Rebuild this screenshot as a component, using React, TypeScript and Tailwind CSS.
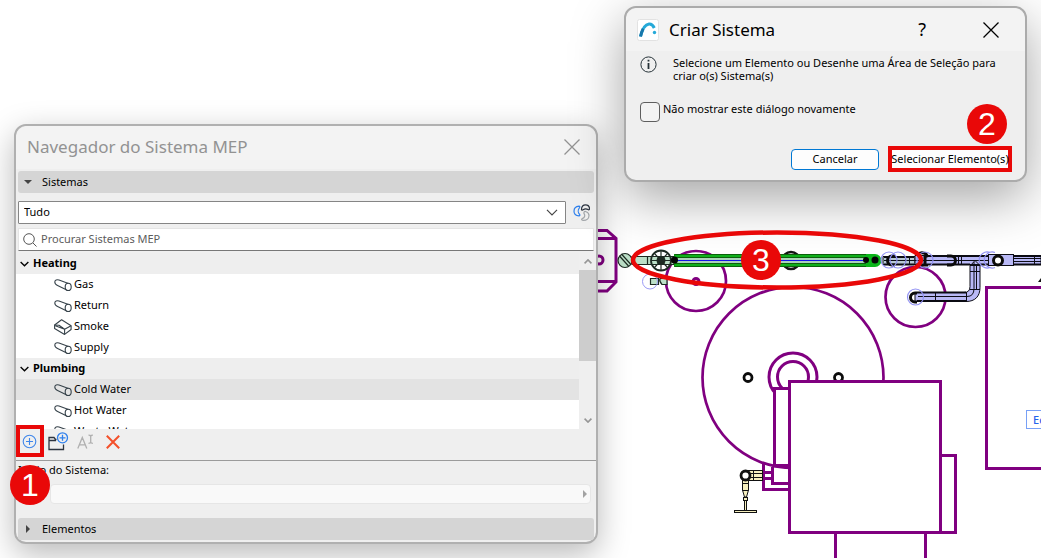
import { useState } from "react";
import type { ReactNode } from "react";

type SystemKind = "pipe" | "duct";

interface SystemItem {
  name: string;
  kind: SystemKind;
}

interface SystemGroup {
  name: string;
  items: SystemItem[];
}

const GROUPS: SystemGroup[] = [
  {
    name: "Heating",
    items: [
      { name: "Gas", kind: "pipe" },
      { name: "Return", kind: "pipe" },
      { name: "Smoke", kind: "duct" },
      { name: "Supply", kind: "pipe" },
    ],
  },
  {
    name: "Plumbing",
    items: [
      { name: "Cold Water", kind: "pipe" },
      { name: "Hot Water", kind: "pipe" },
      { name: "Waste Water", kind: "pipe" },
    ],
  },
];

function PipeIcon() {
  return (
    <svg className="h-4 w-[18px] shrink-0" viewBox="0 0 18 16" fill="none" stroke="#36424a" strokeWidth="1.1">
      <path d="M14.500 6.400 5 3C3 2.300.8 3 .8 5c0 1.800 1 2.700 2.800 3.400l8.700 4.300" />
      <ellipse cx="14.200" cy="9.900" rx="3" ry="3.600" />
    </svg>
  );
}

function DuctIcon() {
  return (
    <svg className="h-4 w-[18px] shrink-0" viewBox="0 0 18 16" fill="none" stroke="#36424a" strokeWidth="1.1" strokeLinejoin="round">
      <path d="M.6 6 7.600.8l9.500 6v3.700l-6.500 4.900L.6 9.600z" />
      <path d="M.6 6l4.400.3 5.600 4L17.100 6.800M10.600 10.300v5M.6 6.500l10 3.800" />
    </svg>
  );
}

function CloseIcon() {
  return (
    <svg className="size-4" viewBox="0 0 16 16" fill="none" stroke="currentColor" strokeWidth="1.3">
      <path d="m.5.5 15 15m0-15-15 15" />
    </svg>
  );
}

function Chevron({ className, weight = 1.5 }: { className: string; weight?: number }) {
  return (
    <svg className={className} viewBox="0 0 10 6" fill="none" stroke="currentColor" strokeWidth={weight}>
      <path d="m.7.7 4.300 4.300L9.300.7" />
    </svg>
  );
}

function SwatchIcon() {
  return (
    <svg className="size-[17px]" viewBox="0 0 17 17" fill="none" strokeWidth="1.2">
      <path stroke="#2f80ed" d="M6 2.200C3 2.500 1 4.600 1 7.200c0 2.700 2 4.400 5 4.600.9 0 1.200-.8.600-1.400-1.700-1.700-1.800-4.600-.2-6.500.7-.8.500-1.700-.4-1.700Z" />
      <path stroke="#2c3440" d="M8.500 5.400C8.500 2.500 10.200.8 12.500.8s4 1.700 4 4.100c0 .9-.8 1.200-1.500.7-1.500-1-3.300-1-4.900.2-.8.600-1.600.4-1.600-.4Z" />
      <path stroke="#a2a6aa" d="M11 8.200c.4-.8 1.300-.9 2.200-.5 1.800.7 2.800 2 2.800 3.800 0 2.700-2.300 4.900-5.500 4.900-1.800 0-2.600-1.100-1.200-1.800 2.500-1.200 3-3 1.900-4.700-.4-.600-.5-1.100-.2-1.700Z" />
    </svg>
  );
}

function FolderPlusIcon() {
  return (
    <svg className="h-5 w-[22px]" viewBox="0 0 22 20" fill="none" strokeWidth="1.3">
      <path stroke="#2c3440" d="M8.500 7.500H7.500L6 5.500H1V17.500h14.500V12.500M1 8.500h7" />
      <circle cx="14.500" cy="5.800" r="5" stroke="#2f80ed" />
      <path stroke="#2f80ed" d="M11.500 5.800h6m-3-3v6" />
    </svg>
  );
}

function RenameIcon() {
  return (
    <svg className="h-4 w-[18px]" viewBox="0 0 18 16" fill="none" stroke="#b0b0b0" strokeWidth="1.3">
      <path d="m.8 14.500 4.500-11 4.500 11M2.300 10.800h6M11.500 1.200c1.300 0 2 .3 2.200 1 .2-.7.900-1 2.200-1M13.700 2.200v6.200M11.500 9.300c1.300 0 2-.3 2.200-1 .2.700.9 1 2.200 1" />
    </svg>
  );
}

function AppLogo() {
  return (
    <svg className="size-[22px]" viewBox="0 0 22 22" fill="none" aria-hidden="true">
      <rect x=".5" y=".5" width="21" height="21" rx="2" fill="#fff" stroke="#e2e2e2" />
      <path d="M3.500 17.500C5 11 7.500 5.500 12 5c2.500-.2 4 1.200 5.300 4" stroke="#25a9d8" strokeWidth="3" />
      <path d="M3.500 17.500c.7-3 1.500-5.600 2.700-7.800" stroke="#1877ab" strokeWidth="3" />
      <circle cx="17.500" cy="13.500" r="1.700" fill="#25a9d8" />
    </svg>
  );
}

function PlanDrawing() {
  return (
    <svg className="absolute left-0 top-0 h-[558px] w-[1041px]" viewBox="0 0 1041 558" fill="none" aria-hidden="true">
      {/* equipment outlines */}
      <g stroke="#800080" strokeWidth="3">
        <path d="M590 230.500h17l9 8v43.500l-9 9h-17M590 238.500h26M590 281.500h26" />
        <circle cx="599" cy="260" r="4" />
        <circle cx="696" cy="281" r="30" strokeWidth="2.700" />
        <circle cx="696" cy="281.500" r="3" />
        <circle cx="915.500" cy="297" r="30" strokeWidth="2.700" />
        <circle cx="793" cy="377.500" r="90.500" strokeWidth="2.700" />
        <circle cx="793" cy="377" r="24" />
        <circle cx="793" cy="377" r="15.500" />
        <path d="M1041 287.500h-54.500v181H1041" />
      </g>
      <g stroke="#0c0c0c" strokeWidth="2.800">
        <circle cx="748" cy="377.500" r="4" />
        <circle cx="838.500" cy="377.500" r="4" />
      </g>
      <g stroke="#800080" strokeWidth="3">
        <path d="M763.500 463v26.500H790M790 483.500h-17.500V467M763.500 472.500h9M763.500 478.500h9M772.500 466H790" />
        <path d="M789 388.500h-14.500v77H789" fill="#fff" />
        <path d="M941 455.500h14.500v77H941M835.500 534v24M925.500 534v24" />
        <rect x="789.500" y="381.500" width="151" height="151" fill="#fff" />
      </g>

      {/* valve with drain */}
      <g stroke="#111" strokeWidth="1" fill="#f6efbe">
        <rect x="747.500" y="470.500" width="15" height="10" />
        <path d="M747 473.500h15M747 477.500h15M753.500 471v9" />
        <path d="M742.500 480h6v10l-2 7h-2l-2-7zM743 483.500h5M742.500 490.500h6" />
        <rect x="743.500" y="497.500" width="4" height="3" />
        <rect x="744.500" y="500.500" width="2" height="10" />
        <rect x="734.500" y="510.500" width="22" height="2" />
        <circle cx="745.500" cy="475.500" r="4.500" fill="#fff" strokeWidth="2.800" />
      </g>

      {/* left fittings */}
      <g stroke="#1d2a22" strokeWidth="1.2">
        <circle cx="625" cy="260.500" r="7" fill="#bce0c8" />
        <path d="m619.500 256 9 10m-7-12 9 10" />
        <path d="M632 256.500h42v8h-42z" fill="#bce0c8" />
        <path d="M647.500 257v7" />
        <circle cx="661" cy="260.500" r="10" strokeWidth="1.800" />
        <circle cx="661" cy="260.500" r="3.500" fill="#1d2a22" strokeWidth="2" />
        <path d="m654 253 14 15M654 268l14-15M661 250v21M651 260.500h24" />
        <path d="M650.500 278.500h8v6h-8zM660 278.500h7v6h-5q-3-3-2-6" fill="#bce0c8" />
      </g>
      <circle cx="650" cy="281.500" r="7.500" stroke="#9a9af5" />

      {/* selected pipe */}
      <circle cx="791" cy="260.500" r="8.500" stroke="#151515" strokeWidth="2.500" />
      <rect x="674.500" y="254.500" width="200" height="12" fill="#aad3ba" />
      <path d="M674 256h200M674 265h200" stroke="#10b01c" strokeWidth="3" />
      <path d="M674 254.500h200M674 257.500h200M674 263.500h200M674 266.500h200" stroke="#0c620c" />
      <path d="M674 260.500h189" stroke="#1515e6" />
      <path d="M674.500 254v13" stroke="#0c900c" />
      <path d="M866 254h9a6.500 6.500 0 0 1 0 13h-9z" fill="#0cb51a" />
      <g fill="#050505">
        <circle cx="674.500" cy="260" r="3.500" />
        <circle cx="866" cy="260" r="3" />
        <circle cx="875" cy="260" r="3.500" />
      </g>

      {/* supply line */}
      <g stroke="#0d0d16" strokeWidth="1">
        <path d="M883 256.500h32v8h-32z" fill="#b8c9d5" />
        <path d="M915 255.500h126v9H915z" fill="#b9b9f6" />
        <path d="M884 260.500h104M1013 258.500h28M1013 261.500h28M955.500 255v10M958.500 255v10M961.500 255v10M1034.500 255v10M909.500 256v9M905.500 256v9" />
        <path d="M915 292.500h49q6 0 6-6v-21h10v22c0 9-5 14-14 14h-51z" fill="#b9b9f6" />
        <path d="M918 296.500h49q7 0 7-8V262M935.500 293v8M966.500 292v10M970 271.500h10M970 289.500h10M976.500 265v24M970.500 265.500l4.500-5 5 5" />
        <rect x="988.500" y="254.500" width="25" height="11" fill="#b9b9f6" />
      </g>
      <path d="M884 257h30M884 264.500h30M928 256h60M928 264.500h42M980 264.500h8M1013 256h28M1013 264.500h28M917 292.500h49M917 301h49" stroke="#0b0b12" strokeWidth="2" />
      <g stroke="#0b0b0b" strokeWidth="3">
        <path d="M895 256h-3a4 4 0 0 0 0 9h3M917 293h-2a4 4 0 0 0 0 9h2M947 256h4a4 4 0 0 1 0 9h-4" />
        <circle cx="998" cy="260.500" r="4.500" fill="#fff" />
        <path d="M917 255q4-4 9-1l2 3M916 265h12M925 256v9" />
      </g>
      <g stroke="#9292f4" strokeWidth="1.2">
        <circle cx="889" cy="260" r="8" />
        <circle cx="898" cy="260" r="8" />
        <circle cx="915.500" cy="297" r="8" />
        <circle cx="925" cy="260" r="8" />
        <path d="M990 252.500a8 8 0 1 0 0 15M995 252.500a8 8 0 1 0 0 15" />
      </g>
      <path d="m1041 278-3 4h3z" fill="#111" />
    </svg>
  );
}

function TreeRow({ item, selected, onSelect }: { item: SystemItem; selected: boolean; onSelect: () => void }) {
  return (
    <button
      onClick={onSelect}
      className={`flex h-[21px] w-full items-center gap-[2px] pl-[38px] text-left text-[11px] ${selected ? "bg-[#e3e3e3]" : "bg-white"}`}
    >
      {item.kind === "pipe" ? <PipeIcon /> : <DuctIcon />}
      <span>{item.name}</span>
    </button>
  );
}

function SectionBar({ label, open, onToggle }: { label: string; open: boolean; onToggle: () => void }) {
  return (
    <button
      onClick={onToggle}
      aria-expanded={open}
      className="mx-[2px] flex h-[22px] items-center gap-2 rounded-[3px] bg-[#d5d5d5] pl-[6px] text-left text-[11px]"
    >
      <svg className="size-2" viewBox="0 0 8 8" fill="#444" aria-hidden="true">
        {open ? <path d="M0 2h8L4 6z" /> : <path d="M2 0v8l4-4z" />}
      </svg>
      <span className="pl-[2px]">{label}</span>
    </button>
  );
}

function Step({ children, className }: { children: ReactNode; className: string }) {
  return (
    <span
      className={`absolute flex size-10 items-center justify-center rounded-full bg-[#e90808] font-['Liberation_Sans',sans-serif] text-[32px] leading-none text-white ${className}`}
    >
      {children}
    </span>
  );
}

function SystemBrowser() {
  const [selected, setSelected] = useState("Cold Water");
  const [systemsOpen, setSystemsOpen] = useState(true);
  const [elementsOpen, setElementsOpen] = useState(false);
  const [query, setQuery] = useState("");

  return (
    <section className="absolute left-[14px] top-[124px] flex w-[584px] flex-col rounded-xl border-2 border-[#b0b0b0] bg-[#efefef] pb-[2px] shadow-[0_10px_32px_rgba(0,0,0,0.28)]">
      <header className="flex h-[43px] items-center justify-between rounded-t-xl bg-[#f3f3f3] pb-[2px] pl-[11px] pr-4 text-[#929292]">
        <h2 className="text-[17px]">Navegador do Sistema MEP</h2>
        <button aria-label="Fechar"><CloseIcon /></button>
      </header>
      <div className="h-[2px]" />
      <SectionBar label="Sistemas" open={systemsOpen} onToggle={() => setSystemsOpen(!systemsOpen)} />

      <div className="mt-2 flex h-[23px] items-center pl-[2px]">
        <div className="relative flex flex-1">
          <select aria-label="Sistema" className="block h-[23px] w-full appearance-none rounded-[1px] border border-[#858585] bg-white pl-[5px] text-[11px]">
            <option>Tudo</option>
          </select>
          <Chevron weight={1} className="pointer-events-none absolute right-2 top-2 h-[7px] w-3 text-[#444]" />
        </div>
        <button aria-label="Cores dos sistemas" className="flex w-[30px] justify-center"><SwatchIcon /></button>
      </div>

      <label className="mx-[2px] mt-1 flex h-[23px] items-center gap-1 border border-b-[#777] border-l-[#e4e4e4] border-r-[#e4e4e4] border-t-[#e4e4e4] bg-white pl-1">
        <svg className="size-[14px] text-[#555]" viewBox="0 0 14 14" fill="none" stroke="currentColor">
          <circle cx="6" cy="6" r="5.300" />
          <path d="m10 10 3.500 3.500" />
        </svg>
        <input
          value={query}
          onChange={(e) => setQuery(e.target.value)}
          placeholder="Procurar Sistemas MEP"
          aria-label="Procurar Sistemas MEP"
          className="flex-1 text-[11px] outline-none placeholder:text-[#5c5c5c]"
        />
      </label>

      <div className="mt-[2px] flex h-[176px]">
        <div className="min-w-0 flex-1 overflow-hidden">
          {GROUPS.map((group) => (
            <div key={group.name}>
              <h3 className="flex h-[21px] items-center gap-1 bg-[#eee] pl-1 text-[11px] font-bold">
                <Chevron className="h-[6px] w-[9px]" />
                {group.name}
              </h3>
              {group.items.map((item) => (
                <TreeRow
                  key={item.name}
                  item={item}
                  selected={selected === item.name}
                  onSelect={() => setSelected(item.name)}
                />
              ))}
            </div>
          ))}
        </div>
        <div className="flex w-[17px] flex-col items-center text-[#969696]">
          <Chevron weight={2} className="my-[6px] h-[5px] w-2 rotate-180" />
          <div className="h-[91px] w-full bg-[#cdcdcd]" />
          <Chevron weight={2} className="mb-[6px] mt-auto h-[5px] w-2" />
        </div>
      </div>

      <div className="flex h-8 items-center gap-[11px] border-b border-[#9b9b9b] pb-[6px] pl-[6px]">
        <button aria-label="Novo sistema">
          <svg className="size-[15px]" viewBox="0 0 15 15" fill="none" stroke="#3f86ea" strokeWidth="1.1">
            <circle cx="7.500" cy="7.500" r="6.300" />
            <path d="M4 7.500h7M7.500 4v7" />
          </svg>
        </button>
        <button aria-label="Novo grupo"><FolderPlusIcon /></button>
        <button aria-label="Renomear" disabled className="-ml-1"><RenameIcon /></button>
        <button aria-label="Apagar">
          <svg className="size-[14px]" viewBox="0 0 14 14" fill="none" stroke="#f4502a" strokeWidth="2">
            <path d="m.8.8 12.400 12.400m0-12.400L.8 13.200" />
          </svg>
        </button>
      </div>

      <div className="flex h-[57px] flex-col text-[11px]">
        <span className="h-[23px] pl-[2px] leading-[18px]">Início do Sistema:</span>
        <button
          aria-label="Início do Sistema"
          disabled
          className="ml-[34px] mr-[5px] flex h-5 items-center justify-end rounded border border-[#e6e6e6] bg-[#f9f9f9] pr-[3px]"
        >
          <svg className="h-2 w-1" viewBox="0 0 4 8" fill="#a3a3a3"><path d="m0 0 4 4-4 4z" /></svg>
        </button>
      </div>
      <SectionBar label="Elementos" open={elementsOpen} onToggle={() => setElementsOpen(!elementsOpen)} />
    </section>
  );
}

function CreateSystemDialog() {
  return (
    <section className="absolute left-[624px] top-[6px] w-[403px] rounded-xl border-2 border-[#ababab] bg-[#efefef] pb-2 shadow-[0_16px_52px_rgba(0,0,0,0.36)]">
      <header className="flex h-[43px] items-center rounded-t-xl bg-[#f3f3f3] pl-[11px] pr-[26px]">
        <AppLogo />
        <h2 className="ml-[10px] flex-1 text-[17px]">Criar Sistema</h2>
        <button aria-label="Ajuda" className="mr-[57px] text-[18px]">?</button>
        <button aria-label="Fechar"><CloseIcon /></button>
      </header>
      <div className="flex pl-[14px] pt-[5px]">
        <svg className="size-[17px] shrink-0" viewBox="0 0 17 17" fill="none" stroke="#263238" aria-hidden="true">
          <circle cx="8.500" cy="8.500" r="7.600" />
          <path strokeWidth="1.800" d="M8.500 7v6M8.500 3.800v1.700" />
        </svg>
        <p className="pl-4 text-[11px] leading-[13px]">
          Selecione um Elemento ou Desenhe uma Área de Seleção para
          <br />
          criar o(s) Sistema(s)
        </p>
      </div>
      <label className="mt-5 flex items-start gap-[3px] pl-[14px] text-[11px] leading-[14px]">
        <input type="checkbox" className="size-5 appearance-none rounded-[4px] border border-[#5e5e5e] bg-[#f3f3f3] checked:bg-[#0078d4]" />
        Não mostrar este diálogo novamente
      </label>
      <div className="mt-6 flex items-center justify-end gap-[9px] pr-[13px] text-[11px]">
        <button className="h-[21px] w-[88px] rounded-[4px] border border-[#0078d4] bg-[#fdfdfd]">Cancelar</button>
        <button className="h-[26px] w-[124px] whitespace-nowrap border-4 border-[#e90808] bg-[#fdfdfd]">
          <span className="flex justify-center">Selecionar Elemento(s)</span>
        </button>
      </div>
    </section>
  );
}

export default function App() {
  return (
    <main className="relative min-h-screen overflow-hidden bg-white font-['Noto_Sans','Open_Sans',sans-serif] text-black">
      <PlanDrawing />
      <button className="absolute left-[1026px] top-[410px] h-[19px] w-16 border border-[#78a0f6] bg-white pl-[6px] text-left text-[11px] font-medium leading-4 text-[#2563eb]">
        Editar
      </button>
      <SystemBrowser />
      <CreateSystemDialog />

      <svg className="pointer-events-none absolute left-[630px] top-[229px] h-[61px] w-[294px]" viewBox="0 0 294 61" fill="none" aria-hidden="true">
        <ellipse cx="147" cy="31" rx="144" ry="27.500" stroke="#e90808" strokeWidth="4.500" />
      </svg>
      <span className="pointer-events-none absolute left-4 top-[425px] h-8 w-7 border-4 border-[#e90808]" />
      <Step className="left-[10px] top-[465px]">1</Step>
      <Step className="left-[967px] top-[104px]">2</Step>
      <Step className="left-[741px] top-[240px]">3</Step>
    </main>
  );
}
